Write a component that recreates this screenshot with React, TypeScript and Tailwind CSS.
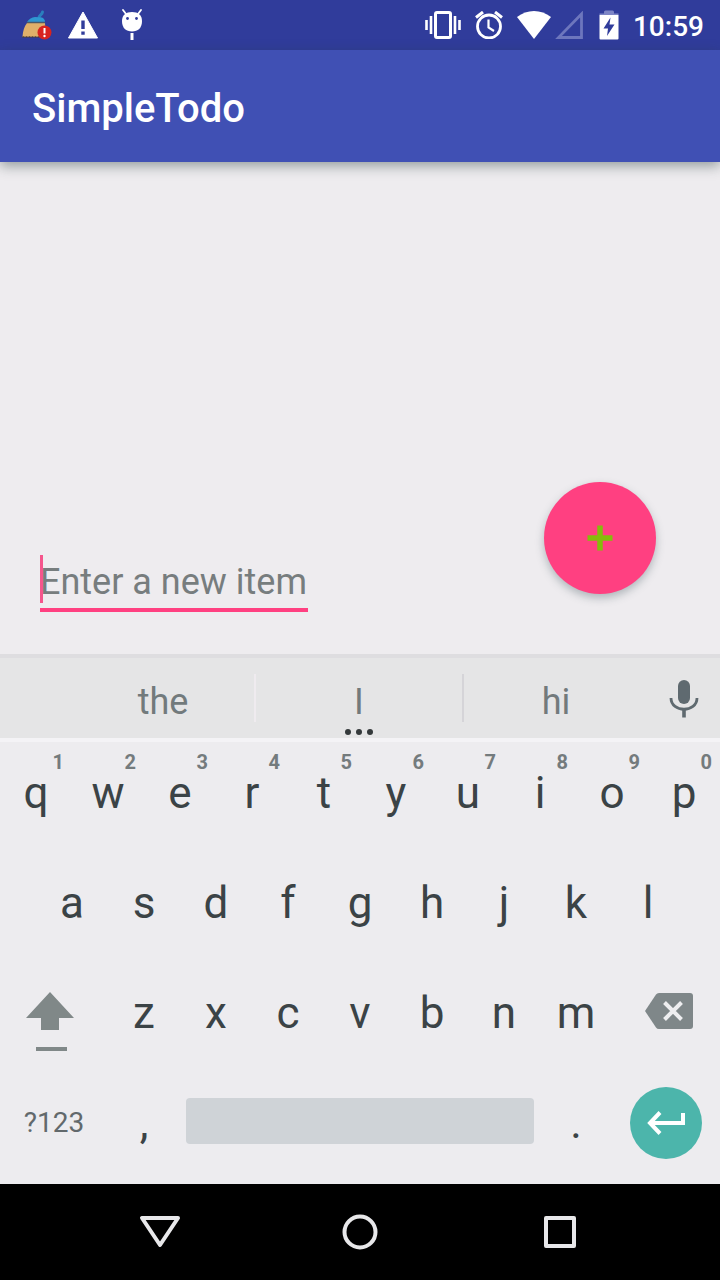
import React, { useState } from "react";

const TOP_ROW: [string, string][] = [
  ["q", "1"], ["w", "2"], ["e", "3"], ["r", "4"], ["t", "5"],
  ["y", "6"], ["u", "7"], ["i", "8"], ["o", "9"], ["p", "0"],
];
const HOME_ROW = ["a", "s", "d", "f", "g", "h", "j", "k", "l"];
const BOTTOM_ROW = ["z", "x", "c", "v", "b", "n", "m"];

function BroomIcon() {
  return (
    <svg width="30" height="30" viewBox="0 0 30 30" aria-hidden="true">
      <path d="M17 8 C17 5 20 5 20.500 2" stroke="#2a7fbd" strokeWidth="3" strokeLinecap="round" fill="none" />
      <path d="M5 12 Q8 7.500 13 7 L20 7.500 Q23 9 23 12 Z" fill="#2f97d2" />
      <path d="M5 13 H23 L24 27 H0.500 Q1 18 5 13 Z" fill="#e0b06a" />
      <path d="M5 12.500 H23" stroke="#4d5a68" strokeWidth="1.500" />
      <path d="M0.500 27 H20" stroke="#4d3f3a" strokeWidth="1.500" strokeDasharray="2 1" />
      <circle cx="22.500" cy="22.500" r="7" fill="#d8231f" />
      <path d="M22.500 18 V23.500" stroke="#fff" strokeWidth="2" />
      <circle cx="22.500" cy="26" r="1.200" fill="#fff" />
    </svg>
  );
}

function WarningIcon() {
  return (
    <svg width="30" height="28" viewBox="0 0 30 28" aria-hidden="true">
      <path d="M15 1 L29.500 27 H0.500 Z" fill="#fff" stroke="#fff" strokeLinejoin="round" />
      <path d="M13.300 9.500 h3.400 v8.500 h-3.400 z M13.300 20.500 h3.400 v3.300 h-3.400 z" fill="#303c9b" />
    </svg>
  );
}

function AndroidIcon() {
  return (
    <svg width="22" height="32" viewBox="0 0 22 32" aria-hidden="true">
      <path d="M2 1 L5 5 M20 1 L17 5" stroke="#fff" strokeWidth="1.800" strokeLinecap="round" />
      <path d="M1 12 C1 6 5 3 11 3 S21 6 21 12 C21 19 17 22.500 11 22.500 S1 19 1 12 Z" fill="#fff" />
      <circle cx="6.500" cy="9.500" r="1.400" fill="#303c9b" />
      <circle cx="15.500" cy="9.500" r="1.400" fill="#303c9b" />
      <path d="M11 24 V31" stroke="#fff" strokeWidth="3" />
    </svg>
  );
}

function VibrateIcon() {
  return (
    <svg width="36" height="28" viewBox="0 0 36 28" fill="none" stroke="#fff" aria-hidden="true">
      <rect x="10.500" y="1.500" width="15" height="25" rx="1.500" strokeWidth="3" />
      <path d="M6 5 V23 M30 5 V23" strokeWidth="2.600" />
      <path d="M1.500 9 V19 M34.500 9 V19" strokeWidth="2.600" />
    </svg>
  );
}

function AlarmIcon() {
  return (
    <svg width="28" height="28" viewBox="0 0 28 28" fill="none" stroke="#fff" aria-hidden="true">
      <circle cx="14" cy="15.500" r="11.500" strokeWidth="2.800" />
      <path d="M1 6.500 L8 1 M27 6.500 L20 1" strokeWidth="3" />
      <path d="M13.500 8.500 V16.500 L19 20" strokeWidth="2.200" />
    </svg>
  );
}

function WifiIcon() {
  return (
    <svg width="34" height="28" viewBox="0 0 34 28" aria-hidden="true">
      <path d="M17 28 L0 6 C10 -2 24 -2 34 6 Z" fill="#fff" />
    </svg>
  );
}

function SignalIcon() {
  return (
    <svg width="30" height="28" viewBox="0 0 30 28" aria-hidden="true">
      <path d="M3.500 26.500 H26.500 V3 Z" fill="none" stroke="#6d76bd" strokeWidth="2.800" />
    </svg>
  );
}

function BatteryIcon() {
  return (
    <svg width="20" height="30" viewBox="0 0 20 30" aria-hidden="true">
      <path d="M0.500 5 V3.500 H5 V2 Q5 0.500 6.500 0.500 H13.500 Q15 0.500 15 2 V3.500 H19.500 V5 Z" fill="#7d85c5" />
      <path d="M0.500 5 H19.500 V28.500 Q19.500 29.500 18.500 29.500 H1.500 Q0.500 29.500 0.500 28.500 Z" fill="#fff" />
      <path d="M11.500 7.500 L4.500 18.500 H9 L8 26 L15.500 14.500 H10.500 Z" fill="#303c9b" />
    </svg>
  );
}

function MicIcon() {
  return (
    <svg width="30" height="40" viewBox="0 0 30 40" aria-hidden="true">
      <rect x="9" y="1" width="12" height="24" rx="6" fill="#5f6a70" />
      <path d="M2 19 C2 34 28 34 28 19" fill="none" stroke="#5f6a70" strokeWidth="2.800" />
      <path d="M15 30 V38.500" stroke="#5f6a70" strokeWidth="3.600" />
    </svg>
  );
}

function ShiftIcon() {
  return (
    <svg width="48" height="60" viewBox="0 0 48 60" fill="#808888" aria-hidden="true">
      <path d="M24 0 L48 26 H33 V38 H15 V26 H0 Z" />
      <rect x="10" y="55" width="31" height="4" />
    </svg>
  );
}

function DeleteIcon() {
  return (
    <svg width="48" height="36" viewBox="0 0 48 36" aria-hidden="true">
      <path d="M11 1.500 Q12 0 14 0 H45 Q48 0 48 3 V33 Q48 36 45 36 H14 Q12 36 11 34.500 L0 18 Z" fill="#7f8789" />
      <path d="M19.500 9.500 L36.500 26.500 M36.500 9.500 L19.500 26.500" stroke="#eeeef0" strokeWidth="4" />
    </svg>
  );
}

function EnterIcon() {
  return (
    <svg width="38" height="24" viewBox="0 0 38 24" fill="none" stroke="#fff" strokeWidth="4" aria-hidden="true">
      <path d="M36 2 V12 H3 M13 1.500 L3 12 L13 22.500" />
    </svg>
  );
}

function LetterKey({ label, hint }: { label: string; hint?: string }) {
  return (
    <button type="button" className="relative flex h-full min-w-0 flex-1 items-center justify-center text-[44px] leading-[52px] text-[#3b4346]">
      {label}
      {hint && (
        <span className="absolute top-[14px] right-2 text-[20px] leading-5 font-bold text-[#747b7d]">{hint}</span>
      )}
    </button>
  );
}

function StatusBar() {
  return (
    <header className="flex h-[50px] items-center justify-between bg-[#303c9b] pr-4 pl-[22px]">
      <div className="flex items-center gap-4">
        <BroomIcon />
        <WarningIcon />
        <div className="pl-[7px]"><AndroidIcon /></div>
      </div>
      <div className="flex items-center gap-[14px]">
        <VibrateIcon />
        <AlarmIcon />
        <div className="flex gap-1">
          <WifiIcon />
          <SignalIcon />
        </div>
        <BatteryIcon />
        <span className="pt-1 text-[28px] leading-8 font-medium text-white">10:59</span>
      </div>
    </header>
  );
}

function Suggestions() {
  return (
    <div className="flex h-[84px] border-t-4 border-[#dedde0] bg-[#e5e5e6] pl-[72px] text-[36px] leading-10 text-[#727a7c]">
      <button type="button" className="flex-[182] pt-2">the</button>
      <span className="mt-4 h-12 w-[2px] bg-[#efebef]" />
      <button type="button" className="relative flex-[206] pt-2">
        I
        <span className="absolute inset-x-0 bottom-[3px] flex justify-center gap-[5px]">
          <i className="size-[6px] rounded-full bg-[#34393b]" />
          <i className="size-[6px] rounded-full bg-[#34393b]" />
          <i className="size-[6px] rounded-full bg-[#34393b]" />
        </span>
      </button>
      <span className="mt-4 h-12 w-[2px] bg-[#d5d4d8]" />
      <button type="button" className="flex-[184] pt-2">hi</button>
      <button type="button" aria-label="Voice input" className="flex w-[72px] items-center justify-center pt-[2px]">
        <MicIcon />
      </button>
    </div>
  );
}

function Keyboard() {
  return (
    <section aria-label="Keyboard" className="bg-[#edecef]">
      <Suggestions />
      <div className="pb-[6px] shadow-[inset_0_4px_0_#f4f3f6]">
        <div className="flex h-[110px]">
          {TOP_ROW.map(([label, hint]) => <LetterKey key={label} label={label} hint={hint} />)}
        </div>
        <div className="flex h-[110px] px-[5%]">
          {HOME_ROW.map((label) => <LetterKey key={label} label={label} />)}
        </div>
        <div className="flex h-[110px]">
          <button type="button" aria-label="Shift" className="flex w-[15%] items-center justify-center pt-[18px] pr-2">
            <ShiftIcon />
          </button>
          <div className="flex flex-1">
            {BOTTOM_ROW.map((label) => <LetterKey key={label} label={label} />)}
          </div>
          <button type="button" aria-label="Delete" className="flex w-[15%] items-center justify-center pb-1 pl-[6px]">
            <DeleteIcon />
          </button>
        </div>
        <div className="flex h-[110px]">
          <button type="button" className="w-[15%] text-[28px] leading-8 text-[#62696c]">?123</button>
          <div className="flex w-[10%]"><LetterKey label="," /></div>
          <div className="flex flex-1 items-center px-[6px] pb-1">
            <button type="button" aria-label="Space" className="h-[46px] w-full rounded-[4px] bg-[#cfd3d7]" />
          </div>
          <div className="flex w-[10%]"><LetterKey label="." /></div>
          <div className="flex w-[15%] items-center justify-center">
            <button type="button" aria-label="Enter" className="flex size-[72px] items-center justify-center rounded-full bg-[#4cb5ab]">
              <EnterIcon />
            </button>
          </div>
        </div>
      </div>
    </section>
  );
}

function NavigationBar() {
  return (
    <nav className="flex h-24 items-center justify-center bg-black">
      <button type="button" aria-label="Back" className="flex w-[200px] justify-center">
        <svg width="42" height="36" viewBox="0 0 42 36" fill="none" stroke="#e8e8ea" strokeWidth="4" strokeLinejoin="round" aria-hidden="true">
          <path d="M3 4 H39 L21 31 Z" />
        </svg>
      </button>
      <button type="button" aria-label="Home" className="flex w-[200px] justify-center">
        <svg width="36" height="36" viewBox="0 0 36 36" fill="none" stroke="#e8e8ea" strokeWidth="4" aria-hidden="true">
          <circle cx="18" cy="18" r="15.500" />
        </svg>
      </button>
      <button type="button" aria-label="Recent apps" className="flex w-[200px] justify-center">
        <svg width="36" height="36" viewBox="0 0 36 36" fill="none" stroke="#e8e8ea" strokeWidth="4" strokeLinejoin="round" aria-hidden="true">
          <rect x="4" y="4" width="28" height="28" />
        </svg>
      </button>
    </nav>
  );
}

export default function App() {
  const [item, setItem] = useState("");

  return (
    <div className="flex min-h-screen flex-col bg-[#eeecef] font-['Roboto',sans-serif]">
      <StatusBar />
      <div className="flex h-28 items-center bg-[#4050b4] px-8 pt-[6px] shadow-[0_4px_12px_rgba(40,60,60,0.45)]">
        <h1 className="text-[40px] leading-12 font-medium text-white">SimpleTodo</h1>
      </div>
      <main className="flex flex-1 items-end justify-between px-10">
        <div className="relative mb-[42px] w-[268px] border-b-4 border-[#ff4081]">
          <input
            type="text"
            aria-label="New item"
            placeholder="Enter a new item"
            value={item}
            onChange={(e) => setItem(e.target.value)}
            className="block h-[52px] w-full bg-transparent text-[36px] text-[#3b4346] outline-none placeholder:text-[#777d7e] placeholder:opacity-100"
          />
          <span className="absolute -top-px left-0 h-12 w-[3px] bg-[#f5558c]" />
        </div>
        <button
          type="button"
          aria-label="Add item"
          className="mr-6 mb-[60px] flex size-28 items-center justify-center rounded-full bg-[#ff4081] shadow-[0_4px_8px_rgba(60,80,90,0.35)]"
        >
          <svg width="26" height="26" viewBox="0 0 26 26" stroke="#84bd0c" strokeWidth="5.500" aria-hidden="true">
            <path d="M13 0.500 V25.500 M0.500 13 H25.500" />
          </svg>
        </button>
      </main>
      <Keyboard />
      <NavigationBar />
    </div>
  );
}
